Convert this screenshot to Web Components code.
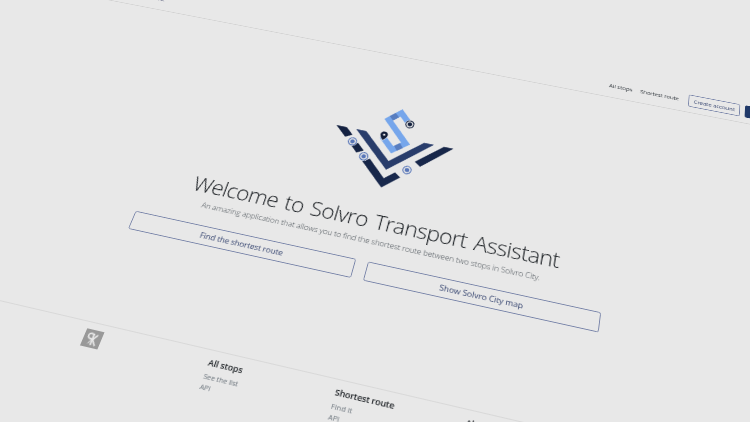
<!DOCTYPE html>
<html lang="en">
<head>
<meta charset="utf-8">
<title>Solvro Transport Assistant</title>
<style>
html,body{margin:0;height:100%;overflow:hidden;background:#e8e8e8}
body{font-family:"Open Sans","Noto Sans",sans-serif;color:#212529}
</style>
</head>
<body>
<tilted-page>
  <site-header slot="header"></site-header>
  <welcome-hero></welcome-hero>
  <site-footer slot="footer"></site-footer>
</tilted-page>
<script>
const define=(name,html,after)=>customElements.define(name,class extends HTMLElement{
  constructor(){super();this.attachShadow({mode:'open'}).innerHTML=html;}
  connectedCallback(){if(after)after(this);}
});

/* One line of text, tracked so that it fills the width given in the attribute. */
const ruler=document.createElement('canvas').getContext('2d');
define('fit-text',`<style>:host{display:inline-block;white-space:nowrap}</style><span><slot></slot></span>`,el=>{
  const want=+el.getAttribute('width'),span=el.shadowRoot.querySelector('span');
  requestAnimationFrame(()=>{
    const s=getComputedStyle(span),text=el.textContent;
    ruler.font=s.fontWeight+' '+s.fontSize+' '+s.fontFamily;
    span.style.letterSpacing=((want-ruler.measureText(text).width)/text.length)+'px';
  });
});

define('outline-button',`<style>
:host{display:flex;align-items:center;justify-content:center;box-sizing:border-box;border:2.2px solid var(--line,#7783a8);border-radius:var(--radius,5px);color:#35446f}
:host([solid]){background:#1f3868;border-color:#1f3868;color:#e8e8e8}
</style><slot></slot>`);

define('site-header',`<style>
:host{display:flex;justify-content:space-between;align-items:flex-end;box-sizing:border-box;height:101px;padding:0 236px 18px 0;border-bottom:2.2px solid #d2d2d2;font-size:16px;color:#343a40}
.brand{width:462px;padding-bottom:4px;text-align:right;font-size:20px;line-height:30px;color:#343a60}
nav{display:flex;align-items:center;height:37px}
nav>*+*{margin-left:21px}
outline-button{height:37px}
.create{width:136px;margin-left:25px}
.login{width:86px;margin-left:13px}
</style>
<div class="brand">Transport Assistant</div>
<nav><fit-text width="62">All stops</fit-text><fit-text width="103">Shortest route</fit-text>
<outline-button class="create"><fit-text width="108">Create account</fit-text></outline-button>
<outline-button class="login" solid>Log in</outline-button></nav>`);

define('route-logo',`<style>:host{display:block;width:320px;height:240px}svg{display:block;width:100%;height:100%}</style>
<svg viewBox="408.500 153 320 240">
<defs>
<linearGradient id="n" x1="0" y1="0" x2="1" y2="1"><stop offset="0" stop-color="#13203f"/><stop offset="1" stop-color="#1b2c52"/></linearGradient>
<g id="stop"><circle r="13" fill="#e8e8e8"/><circle r="10.5" fill="none" stroke="currentColor" stroke-width="2.6"/><circle r="5.7" fill="currentColor"/></g>
</defs>
<path fill="url(#n)" d="M410 243H438L458 261.500L441 271ZM478 281L498 299L481 309L461 290ZM519 318L566.500 363L590 341L606 352L566.500 389L502 329ZM632 301L695 243H720L648 312Z"/>
<path fill="#293d6b" d="M463 243H490L566.500 314L643 243H669L566.500 339Z"/>
<path fill="none" stroke="#76a6eb" stroke-width="16" d="M590 194L566 170.500L538 198L597 256L568 281L534 249"/>
<path fill="none" stroke="#587dbf" stroke-width="16" d="M544 192L557 179.300M588 264L575 275"/>
<use href="#stop" x="463" y="280" color="#5876b8"/>
<use href="#stop" x="502" y="315" color="#5876b8"/>
<use href="#stop" x="618" y="328" color="#5876b8"/>
<use href="#stop" x="595" y="199" color="#16233f"/>
<path fill="#101b36" stroke="#e8e8e8" stroke-width="3" paint-order="stroke" d="M537 259C531 252 528 248 528 243A9.500 9.500 0 0 1 547 243C547 248 543 252 537 259Z"/>
<circle cx="537.500" cy="243" r="3" fill="#e8e8e8"/>
</svg>`);

define('welcome-hero',`<style>
:host{display:flex;flex-direction:column;align-items:center;box-sizing:border-box;width:1140px;height:857px;margin:0 auto;padding-top:152px}
h1{margin:51px 0 5px;font-size:55px;line-height:67px;font-weight:300;word-spacing:5px}
p{margin:0;font-size:20px;line-height:30px;font-weight:300;color:#50575d}
.row{display:grid;grid-template-columns:1fr 1fr;gap:31px;width:1140px;margin-top:36px}
outline-button{height:48px;font-size:20px}
</style>
<route-logo></route-logo>
<h1><fit-text width="898">Welcome to Solvro Transport Assistant</fit-text></h1>
<p><fit-text width="842">An amazing application that allows you to find the shortest route between two stops in Solvro City.</fit-text></p>
<div class="row">
<outline-button><fit-text width="208">Find the shortest route</fit-text></outline-button>
<outline-button><fit-text width="199">Show Solvro City map</fit-text></outline-button>
</div>`);

define('link-column',`<style>
:host{display:block}
h5{margin:0 0 8px;font-size:20px;line-height:24px;font-weight:600}
::slotted(fit-text){display:block!important;font-size:16px;line-height:23px;color:#6c757d}
::slotted([slot=title]){font-size:20px;line-height:24px;color:#212529}
</style><h5><slot name="title"></slot></h5><slot></slot>`);

define('site-footer',`<style>
:host{display:block;border-top:2.2px solid #d8d8d8}
.cols{display:grid;grid-template-columns:293px 293px 293px 1fr;box-sizing:border-box;width:1140px;margin:0 auto;padding:14px 0 0 4px}
svg{display:block;width:42px;height:41px}
</style>
<div class="cols">
<svg viewBox="0 0 41 40"><path fill="#999" d="M0 0H41V40H0Z"/><g fill="none" stroke="#e8e8e8"><path stroke-width="4" d="M21 33V8"/><path stroke-width="3.500" d="M21 9.500C12 7 9 10 9.500 14C10 19 15 20 20 20M30 9L22 21L31 33"/><path d="M20 20L14 31" stroke-width="2"/></g></svg>
<link-column><fit-text slot="title" width="80">All stops</fit-text><fit-text width="80">See the list</fit-text><fit-text width="24">API</fit-text></link-column>
<link-column><fit-text slot="title" width="134">Shortest route</fit-text><fit-text width="47">Find it</fit-text><fit-text width="24">API</fit-text></link-column>
<link-column><fit-text slot="title" width="56">About</fit-text></link-column>
</div>`);

/* A wide flat page seen in perspective; laid out near its final scale so that type stays smooth. */
define('tilted-page',`<style>
:host{display:block;width:1152px;height:576px;transform-origin:0 0;
transform:matrix3d(.3341824,.0655872,0,-.0000403691,-.1679132,.2823031,0,-.0002078202,0,0,1,0,217.2,21.3,0,1) translate(-630px,-100px) scale(2.0833333)}
.flat{width:2400px;zoom:.48}
</style><div class="flat"><slot name="header"></slot><slot></slot><slot name="footer"></slot></div>`);
</script>
</body>
</html>
